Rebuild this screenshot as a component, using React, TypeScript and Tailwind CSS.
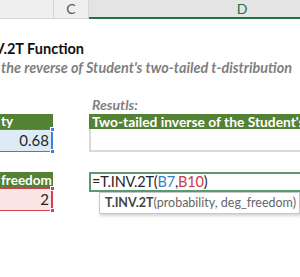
import React from 'react';

const Handle = ({ pos, color }: { pos: string; color: string }) => (
  <span className={`absolute w-[5px] h-[5px] ${pos} ${color} border border-white`} />
);

export default function App() {
  return (
    <div className="w-[300px] h-[277px] overflow-hidden bg-white font-['Lato','Open_Sans',sans-serif] text-[#262626]">
      {/* column headers */}
      <div className="flex h-[19px] text-[14px] leading-none">
        <div className="w-[54px] shrink-0 bg-[#efefef] border-r border-b border-[#d6d6d6]" />
        <div className="w-[35px] shrink-0 bg-[#efefef] border-r border-b border-[#d6d6d6] flex items-center justify-center text-[#555]">
          C
        </div>
        <div className="w-[306px] shrink-0 bg-[#e4e4e4] border-b-2 border-[#217346] flex items-center justify-center text-[#217346]">
          D
        </div>
      </div>

      {/* title */}
      <div className="mt-[21px] w-[84px] h-[17px] flex justify-end overflow-hidden">
        <span className="whitespace-nowrap font-bold text-[14.5px] leading-[17px] text-[#111]">
          T.INV.2T Function
        </span>
      </div>
      <div className="mt-[2px] w-[292px] h-[17px] flex justify-end overflow-hidden">
        <span className="whitespace-nowrap font-bold italic text-[14.4px] leading-[17px] text-[#7f7f7f]">
          Returns the reverse of Student's two-tailed t-distribution
        </span>
      </div>

      {/* probability / result */}
      <div className="mt-[19px] grid grid-cols-[54px_35px_211px]">
        <div className="pt-[19px]">
          <div className="w-[53px] h-[15px] bg-[#548235] text-white font-bold text-[13.5px] leading-[15px] pl-[1px]">
            ty
          </div>
          <div className="relative w-[53px] h-[23px] bg-[#ddebf7] border-y border-r-2 border-[#3f7fd4] flex items-center justify-end pr-[2px] text-[15px]">
            0.68
            <Handle pos="-top-[3px] -right-[4px]" color="bg-[#3f7fd4]" />
            <Handle pos="-bottom-[3px] -right-[4px]" color="bg-[#3f7fd4]" />
          </div>
        </div>
        <div />
        <div>
          <div className="h-[19px] pl-[3px] font-bold italic text-[14px] leading-[19px] text-[#7f7f7f]">
            Resutls:
          </div>
          <div className="h-[15px] bg-[#548235] text-white font-bold text-[13.8px] leading-[15px] pl-[3px] whitespace-nowrap overflow-hidden">
            Two-tailed inverse of the Student's t-distribution
          </div>
          <div className="h-[23px] border-l-2 border-b-2 border-[#d9d9d9]" />
        </div>
      </div>

      {/* degrees of freedom / formula */}
      <div className="mt-[20px] grid grid-cols-[54px_35px_211px]">
        <div>
          <div className="w-[53px] h-[16px] bg-[#548235] text-white font-bold text-[13.5px] leading-[16px] pl-[1px] whitespace-nowrap overflow-hidden">
            freedom
          </div>
          <div className="relative w-[53px] h-[23px] bg-[#fbe5e5] border-y border-r-2 border-[#d3404f] flex items-center justify-end pr-[2px] text-[15px]">
            2
            <Handle pos="-top-[3px] -right-[4px]" color="bg-[#d3404f]" />
            <Handle pos="-bottom-[3px] -right-[4px]" color="bg-[#d3404f]" />
          </div>
        </div>
        <div />
        <div className="relative">
          <div className="h-[20px] border-2 border-r-0 border-[#5b9a70] pl-[1px] text-[14.5px] leading-[16px] whitespace-nowrap tracking-[-0.2px]">
            =T.INV.2T(<span className="text-[#3a7fc6]">B7</span>,<span className="text-[#c83a4c]">B10</span>)
          </div>
          <div className="absolute top-[20px] left-[10px] w-[201px] h-[22px] bg-white border border-[#c8c8c8] shadow-[1px_2px_3px_rgba(0,0,0,0.18)] flex items-center pl-[5px] text-[12.5px] whitespace-nowrap">
            <span className="font-bold text-[#444]">T.INV.2T</span>
            <span className="text-[#666]">(probability, deg_freedom)</span>
          </div>
        </div>
      </div>
    </div>
  );
}
